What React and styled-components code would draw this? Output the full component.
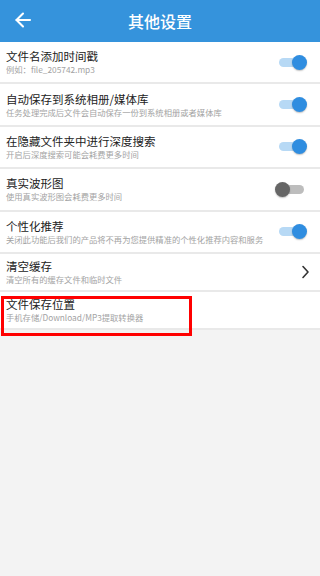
import React from "react";
import styled, { createGlobalStyle } from "styled-components";

const GlobalStyle = createGlobalStyle`
  html, body {
    margin: 0;
    padding: 0;
    background: #f3f3f3;
  }
  body {
    font-family: "Noto Sans CJK SC", Roboto, "Noto Sans", sans-serif;
  }
`;

const settings = [
  { title: "文件名添加时间戳", sub: "例如：file_205742.mp3", type: "switch", on: true },
  { title: "自动保存到系统相册/媒体库", sub: "任务处理完成后文件会自动保存一份到系统相册或者媒体库", type: "switch", on: true },
  { title: "在隐藏文件夹中进行深度搜索", sub: "开启后深度搜索可能会耗费更多时间", type: "switch", on: true },
  { title: "真实波形图", sub: "使用真实波形图会耗费更多时间", type: "switch", on: false },
  { title: "个性化推荐", sub: "关闭此功能后我们的产品将不再为您提供精准的个性化推荐内容和服务", type: "switch", on: true },
  { title: "清空缓存", sub: "清空所有的缓存文件和临时文件", type: "arrow" },
  { title: "文件保存位置", sub: "手机存储/Download/MP3提取转换器", type: "none", marked: true },
];

const App = () => {
  return (
    <>
      <GlobalStyle />
      <Page>
        <Header>
          <BackButton>
            <svg width="24" height="24" viewBox="0 0 24 24" fill="none" stroke="#fff" strokeWidth="2.1" strokeLinecap="round" strokeLinejoin="round">
              <path d="M12 18.5 5.5 12 12 5.5" />
              <path d="M19 12H5.5" />
            </svg>
          </BackButton>
          <Title>其他设置</Title>
        </Header>
        <List>
          {settings.map((item) => (
            <Row key={item.title} $short={item.type !== "switch"}>
              <Texts>
                <RowTitle>{item.title}</RowTitle>
                <RowSub>{item.sub}</RowSub>
              </Texts>
              {item.type === "switch" && (
                <Switch>
                  <Track $on={item.on} />
                  <Thumb $on={item.on} />
                </Switch>
              )}
              {item.type === "arrow" && (
                <Chevron width="10" height="14" viewBox="0 0 10 14" fill="none" stroke="#333" strokeWidth="1.6" strokeLinecap="round" strokeLinejoin="round">
                  <path d="M3 1.5 8 7 3 12.5" />
                </Chevron>
              )}
              {item.marked && <Marker />}
            </Row>
          ))}
        </List>
      </Page>
    </>
  );
};

export default App;

const Page = styled.div`
  width: 320px;
  min-height: 576px;
  background: #f3f3f3;
`;

const Header = styled.header`
  position: relative;
  height: 42px;
  background: #3593dc;
  display: flex;
  align-items: center;
  justify-content: center;
`;

const BackButton = styled.div`
  position: absolute;
  left: 11px;
  top: 8px;
  width: 24px;
  height: 24px;
  display: flex;
`;

const Title = styled.h1`
  margin: 0;
  color: #fff;
  font-size: 16px;
  font-weight: 500;
  line-height: 20px;
`;

const List = styled.div`
  display: flex;
  flex-direction: column;
`;

const Row = styled.div`
  position: relative;
  height: ${(p) => (p.$short ? "36px" : "40.4px")};
  background: #fff;
  border-bottom: 2px solid #e9e9e9;
  display: flex;
  align-items: center;
  padding: 0 0 0 6px;
`;

const Texts = styled.div`
  flex: 1;
  display: flex;
  flex-direction: column;
  gap: 1px;
  min-width: 0;
`;

const RowTitle = styled.div`
  font-size: 11.5px;
  line-height: 14px;
  color: #222;
  white-space: nowrap;
`;

const RowSub = styled.div`
  font-size: 8.3px;
  line-height: 11px;
  color: #a3a3a3;
  white-space: nowrap;
`;

const Switch = styled.div`
  position: relative;
  width: 32px;
  height: 16px;
  margin-right: 13px;
  flex-shrink: 0;
`;

const Track = styled.div`
  position: absolute;
  left: 4px;
  right: 3px;
  top: 3.5px;
  height: 9px;
  border-radius: 5px;
  background: ${(p) => (p.$on ? "#b7d9f5" : "#bdbdbd")};
`;

const Thumb = styled.div`
  position: absolute;
  top: 0.5px;
  left: ${(p) => (p.$on ? "17px" : "0px")};
  width: 15px;
  height: 15px;
  border-radius: 50%;
  background: ${(p) => (p.$on ? "#2f8de0" : "#666")};
  box-shadow: 0 1px 1.5px rgba(0, 0, 0, 0.25);
`;

const Chevron = styled.svg`
  margin-right: 10px;
  flex-shrink: 0;
`;

const Marker = styled.div`
  position: absolute;
  left: 1px;
  top: 4px;
  width: 191px;
  height: 40px;
  box-sizing: border-box;
  border: 3px solid #ff0000;
  pointer-events: none;
  z-index: 2;
`;
